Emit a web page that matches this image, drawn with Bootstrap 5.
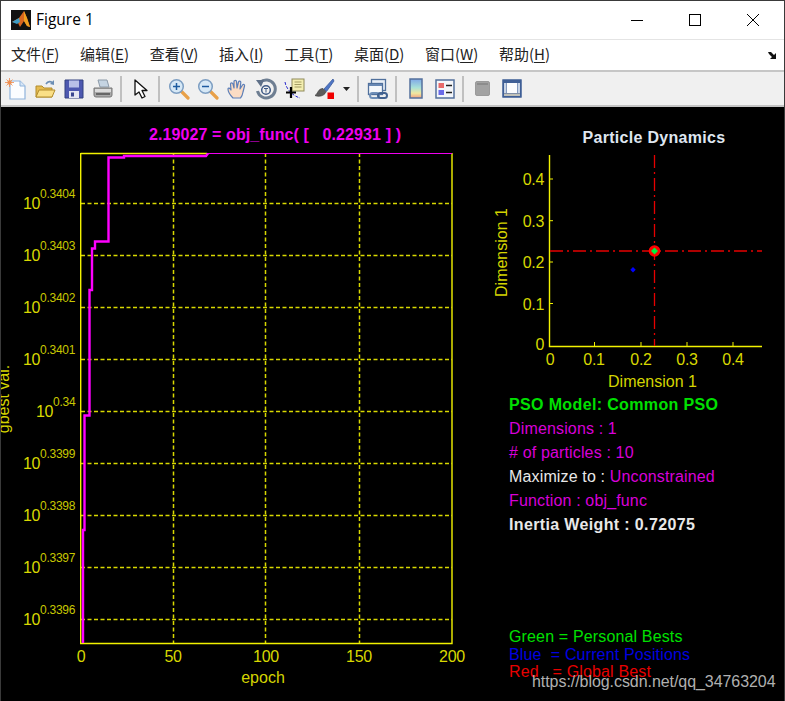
<!DOCTYPE html>
<html lang="zh">
<head>
<meta charset="utf-8">
<title>Figure 1</title>
<link href="https://cdn.jsdelivr.net/npm/bootstrap@5.3.0/dist/css/bootstrap.min.css" rel="stylesheet">
<style>
html,body{margin:0;height:701px;overflow:hidden;background:#000}
.fig-win{height:701px;border:1px solid #3a3a3a;border-bottom:0;background:#000}
.title-bar{height:38px;background:#fff;font:15px/1 "Open Sans","Noto Sans",sans-serif;color:#000;padding-left:10px}
.title-txt{margin-left:5px;font-size:15.5px}
.win-btns{margin-left:auto;padding-right:2px}
.win-btn{width:58px;height:38px}
.menu-bar{height:33px;background:#fff;border-top:1px solid #e4e4e4;border-bottom:2px solid #c6c6c6;padding:0 6px 3px 10px;gap:20.6px;font:15px/1 "Noto Sans CJK SC",sans-serif;color:#222}
.menu-bar u{text-underline-offset:2px}
.menu-end{margin-left:auto;margin-top:3px}
.tool-bar{height:35px;background:#f0f0f0;border-bottom:2px solid #c4c4c4}
.tb-btn{width:29px;height:32px}
.tb-drop{width:16px;height:32px}
.tb-sep{width:2px;height:26px;margin:0 4px 0 3px;background:#c0c0c0}
.plot-svg{display:block;width:783px;height:594px;font-family:"Liberation Sans",sans-serif}
.axis-txt{fill:#d8d800;font-size:16px;letter-spacing:-.3px}
.exp-txt{fill:#c8c800;font-size:12px;letter-spacing:-.25px}
.lab-txt{fill:#d4d400;font-size:16px}
.info{font-size:16px;letter-spacing:.15px}
.info-b{font-size:16px;font-weight:700;letter-spacing:.36px}
.c-mag{fill:#d800d8}
.c-grn{fill:#00e000}
.c-blu{fill:#0000e0}
.c-red{fill:#e80000}
.c-wht{fill:#e8e8e8}
.mark-txt{fill:#b0b0b0;font-size:16px;letter-spacing:-.06px}
.title-mag{fill:#f000f0;font-size:16px;font-weight:700;letter-spacing:.1px}
.title-wht{fill:#dfe6f0;font-size:16px;font-weight:700;letter-spacing:.3px}
</style>
</head>
<body>
<div class="fig-win d-flex flex-column">
  <div class="title-bar d-flex align-items-center">
    <svg width="20" height="20" viewBox="0 0 20 20"><rect width="20" height="20" fill="#111"/><path d="M1 12 8 8l5-7 3 7 3 9-3-1-3-5-4 6-2-4z" fill="#d9661f"/><path d="M13 1l3 7 3 9-3-1-3-5z" fill="#f0a020"/><path d="M1 12l7-4 1 4-3 2z" fill="#3f9cc4"/></svg>
    <span class="title-txt">Figure 1</span>
    <div class="win-btns d-flex">
      <div class="win-btn d-flex align-items-center justify-content-center"><svg width="12" height="12"><path d="M0 6.500h12" stroke="#000"/></svg></div>
      <div class="win-btn d-flex align-items-center justify-content-center"><svg width="12" height="12"><rect x=".5" y=".5" width="11" height="11" fill="none" stroke="#000"/></svg></div>
      <div class="win-btn d-flex align-items-center justify-content-center"><svg width="12" height="12"><path d="M0 0l12 12M12 0 0 12" stroke="#000"/></svg></div>
    </div>
  </div>
  <div class="menu-bar d-flex align-items-center">
    <span>文件(<u>F</u>)</span><span>编辑(<u>E</u>)</span><span>查看(<u>V</u>)</span><span>插入(<u>I</u>)</span><span>工具(<u>T</u>)</span><span>桌面(<u>D</u>)</span><span>窗口(<u>W</u>)</span><span>帮助(<u>H</u>)</span>
    <svg class="menu-end" width="10" height="9" viewBox="0 0 10 9"><path d="M0 1h3l3 3 2-2v6H2l2-2-3-3z" fill="#111"/></svg>
  </div>
  <div class="tool-bar d-flex align-items-center">
    <div class="tb-btn d-flex align-items-center justify-content-center"><svg width="22" height="22" viewBox="0 0 22 22"><path d="M5 3h10l5 5v13H5z" fill="#fbfdff" stroke="#8fb4dc" stroke-width="1.200"/><path d="M15 3v5h5" fill="#d8e6f6" stroke="#8fb4dc"/><circle cx="4.500" cy="4.500" r="2.200" fill="#f3a15a"/><path d="M4.500 0v9M0 4.500h9M1.500 1.500l6 6M7.500 1.500l-6 6" stroke="#ee8a50" stroke-width=".8"/></svg></div>
    <div class="tb-btn d-flex align-items-center justify-content-center"><svg width="22" height="22" viewBox="0 0 22 22"><path d="M12 6c2-3 5-3 7-1" fill="none" stroke="#6a8db5" stroke-width="1.600"/><path d="M20 2l0 5-4-1z" fill="#6a8db5"/><path d="M2 8h6l2 2h8v9H2z" fill="#e5bb50" stroke="#b28c2c"/><path d="M2 19l3-7h16l-3 7z" fill="#fadf86" stroke="#b28c2c"/></svg></div>
    <div class="tb-btn d-flex align-items-center justify-content-center"><svg width="22" height="22" viewBox="0 0 22 22"><path d="M2 2h18v18H2z" fill="#4d58b0" stroke="#33407f"/><rect x="6" y="2.500" width="10" height="7" fill="#b8c0e8"/><rect x="6" y="13" width="10" height="7" fill="#e4e6f2"/><rect x="8" y="14.500" width="3" height="4" fill="#3a4690"/></svg></div>
    <div class="tb-btn d-flex align-items-center justify-content-center"><svg width="22" height="22" viewBox="0 0 22 22"><path d="M6 2h9l2 7H8z" fill="#c5d4e2" stroke="#8c9aa8"/><path d="M2 10h18v7a2 2 0 0 1-2 2H4a2 2 0 0 1-2-2z" fill="#a9a9a9" stroke="#777"/><path d="M3 11h16v3H3z" fill="#dcdcdc"/><rect x="4" y="15" width="14" height="2" fill="#666"/></svg></div>
    <div class="tb-sep"></div>
    <div class="tb-btn d-flex align-items-center justify-content-center"><svg width="16" height="20" viewBox="0 0 16 20"><path d="M2 1v15l4-3 3 6 3-1.500-3-6h5z" fill="#fff" stroke="#111" stroke-width="1.300" stroke-linejoin="round"/></svg></div>
    <div class="tb-sep"></div>
    <div class="tb-btn d-flex align-items-center justify-content-center"><svg width="22" height="22" viewBox="0 0 22 22"><path d="M13 13l7 7" stroke="#e8a048" stroke-width="3.200" stroke-linecap="round"/><circle cx="8.500" cy="8.500" r="6.800" fill="#d6e8f6" stroke="#7d9ec2" stroke-width="1.500"/><path d="M8.500 5v7M5 8.500h7" stroke="#1d5ba0" stroke-width="1.500"/></svg></div>
    <div class="tb-btn d-flex align-items-center justify-content-center"><svg width="22" height="22" viewBox="0 0 22 22"><path d="M13 13l7 7" stroke="#e8a048" stroke-width="3.200" stroke-linecap="round"/><circle cx="8.500" cy="8.500" r="6.800" fill="#d6e8f6" stroke="#7d9ec2" stroke-width="1.500"/><path d="M5 8.500h7" stroke="#1d5ba0" stroke-width="1.500"/></svg></div>
    <div class="tb-btn d-flex align-items-center justify-content-center"><svg width="22" height="22" viewBox="0 0 22 22"><path d="M7 20c-2-2-5-6-5-9 0-1.500 2-1 3 1L4.500 6c0-1.500 2-1.500 2.500 0L8 10 8 3.500c0-1.500 2.500-1.500 2.500 0L11 10l1.500-6c.4-1.500 2.500-1 2.300.5L14 11l2.500-4c1-1.300 2.500-.5 2 1L17 14c-.5 3-1 4.500-2.500 6z" fill="#fbdcc4" stroke="#5c7fb8" stroke-width="1.200" stroke-linejoin="round"/></svg></div>
    <div class="tb-btn d-flex align-items-center justify-content-center"><svg width="22" height="22" viewBox="0 0 22 22"><path d="M5 4.500A9 9 0 1 1 2.500 13" fill="none" stroke="#6e7e92" stroke-width="3"/><path d="M1 2l8 0-3 7z" fill="#5f7088"/><circle cx="11" cy="12" r="4.300" fill="none" stroke="#3f5a86" stroke-width="1.500"/><path d="M9 10.500h4M11 10.500v4" stroke="#3f5a86"/></svg></div>
    <div class="tb-btn d-flex align-items-center justify-content-center"><svg width="22" height="22" viewBox="0 0 22 22"><rect x="8" y="1" width="12" height="12" fill="#f3eeb0" stroke="#8f8a5a"/><path d="M10.500 4h7M10.500 6.500h7M10.500 9h7" stroke="#a39c62"/><path d="M1 4c1 7 8 14 15 16" fill="none" stroke="#2222cc" stroke-dasharray="3 1.500"/><path d="M7 9v11M2 14.500h10" stroke="#000" stroke-width="2.200"/></svg></div>
    <div class="tb-btn d-flex align-items-center justify-content-center"><svg width="22" height="22" viewBox="0 0 22 22"><path d="M20 1l-9 10 2.500 2.500L21 3z" fill="#4f76c6" stroke="#3a5a9c" stroke-width=".8"/><path d="M10 10.500c-5 0-5 5-8 7 3 1.500 9 1 11-3.500z" fill="#5c5c5c" stroke="#333" stroke-width=".6"/><rect x="14.500" y="14.500" width="6.500" height="6.500" fill="#f00000"/></svg></div>
    <div class="tb-drop d-flex align-items-center justify-content-center"><svg width="7" height="4"><path d="M0 0h7L3.500 4z" fill="#222"/></svg></div>
    <div class="tb-sep"></div>
    <div class="tb-btn d-flex align-items-center justify-content-center"><svg width="22" height="22" viewBox="0 0 22 22"><rect x="4.500" y="1.500" width="14" height="11" fill="#e8eef6" stroke="#50709c" stroke-width="1.300"/><rect x="1.500" y="5.500" width="14" height="11" fill="#f6f8fb" stroke="#50709c" stroke-width="1.300"/><path d="M2 6h13v2H2z" fill="#6888b4"/><rect x="3" y="15" width="9" height="5" rx="2.500" fill="none" stroke="#6f8fb8" stroke-width="2"/><rect x="11" y="15" width="9" height="5" rx="2.500" fill="none" stroke="#41618f" stroke-width="2"/></svg></div>
    <div class="tb-sep"></div>
    <div class="tb-btn d-flex align-items-center justify-content-center"><svg width="14" height="21" viewBox="0 0 14 21"><defs><linearGradient id="cbar" x1="0" y1="0" x2="0" y2="1"><stop offset="0" stop-color="#7fa8e8"/><stop offset=".45" stop-color="#a8e0d8"/><stop offset=".75" stop-color="#f0e8a0"/><stop offset="1" stop-color="#f0a080"/></linearGradient></defs><rect x="1" y="1" width="12" height="19" fill="url(#cbar)" stroke="#54709c" stroke-width="1.500"/></svg></div>
    <div class="tb-btn d-flex align-items-center justify-content-center"><svg width="20" height="20" viewBox="0 0 20 20"><rect x="1" y="1" width="18" height="18" fill="#f4f6fa" stroke="#54709c" stroke-width="1.500"/><rect x="3.500" y="4" width="5.500" height="5" fill="#e86a6a"/><rect x="3.500" y="11" width="5.500" height="5" fill="#6a6ae8"/><path d="M11 6.500h6M11 13.500h6" stroke="#222" stroke-width="1.300"/></svg></div>
    <div class="tb-sep"></div>
    <div class="tb-btn d-flex align-items-center justify-content-center"><svg width="15" height="15" viewBox="0 0 15 15"><rect x=".5" y=".5" width="14" height="14" rx="1.500" fill="#a2a2a2" stroke="#9a9a9a"/><path d="M2 2h11v2H2z" fill="#8c8c8c"/></svg></div>
    <div class="tb-btn d-flex align-items-center justify-content-center"><svg width="20" height="19" viewBox="0 0 20 19"><rect x=".8" y=".8" width="18.400" height="17.400" fill="#3f5f96" stroke="#3f5f96"/><rect x="5" y="4" width="10" height="10" fill="#fbfcfe"/><rect x="2" y="4" width="2.500" height="10" fill="#c8d4e6"/><rect x="15.500" y="4" width="2.500" height="10" fill="#c8d4e6"/><rect x="2" y="14.500" width="16" height="2.500" fill="#c0c0b8"/></svg></div>
  </div>
  <svg class="plot-svg" viewBox="1 107 783 594" xmlns="http://www.w3.org/2000/svg">
    <g stroke="#d8d800" stroke-width="1.500" stroke-dasharray="4 2.500" fill="none">
      <path d="M81 203.500H452M81 255.500H452M81 307.500H452M81 359.500H452M81 411.500H452M81 463.500H452M81 515.500H452M81 567.500H452M81 619.500H452"/>
      <path d="M173.500 153V643M265.500 153V643M359.500 153V643"/>
    </g>
    <path d="M80.700 153.500H207M80.700 153V643.500H452V153" fill="none" stroke="#f2f200" stroke-width="1.400"/>
    <path d="M207 153.500H452" fill="none" stroke="#f000f0" stroke-width="1.200"/>
    <path d="M83 643V530H84.500V415.500H89.500V290H92V248.500H95V241.500H108.500V157.500H124V156H206L208 153.500" fill="none" stroke="#ff00ff" stroke-width="2.400"/>

    <text class="title-mag" x="149" y="140" xml:space="preserve">2.19027 = obj_func( [   0.22931 ] )</text>

    <text class="axis-txt" x="23" y="209">10</text><text class="exp-txt" x="40" y="198">0.3404</text>
    <text class="axis-txt" x="23" y="261">10</text><text class="exp-txt" x="40" y="250">0.3403</text>
    <text class="axis-txt" x="23" y="313">10</text><text class="exp-txt" x="40" y="302">0.3402</text>
    <text class="axis-txt" x="23" y="365">10</text><text class="exp-txt" x="40" y="354">0.3401</text>
    <text class="axis-txt" x="36" y="417">10</text><text class="exp-txt" x="53" y="406">0.34</text>
    <text class="axis-txt" x="23" y="469">10</text><text class="exp-txt" x="40" y="458">0.3399</text>
    <text class="axis-txt" x="23" y="521">10</text><text class="exp-txt" x="40" y="510">0.3398</text>
    <text class="axis-txt" x="23" y="573">10</text><text class="exp-txt" x="40" y="562">0.3397</text>
    <text class="axis-txt" x="23" y="625">10</text><text class="exp-txt" x="40" y="614">0.3396</text>

    <g class="axis-txt" text-anchor="middle">
      <text x="81" y="662">0</text><text x="173" y="662">50</text><text x="266" y="662">100</text><text x="359" y="662">150</text><text x="452" y="662">200</text>
    </g>
    <text class="lab-txt" x="263" y="683" text-anchor="middle">epoch</text>
    <text class="lab-txt" transform="translate(9 399) rotate(-90)" text-anchor="middle">gbest val.</text>

    <text class="title-wht" x="654" y="143" text-anchor="middle">Particle Dynamics</text>
    <path d="M549.500 155V346.500H762" fill="none" stroke="#f2f200" stroke-width="1.400"/>
    <path d="M549 179h4M549 220.700h4M549 262h4M549 303.500h4M594.500 346v-4M641 346v-4M687 346v-4M733 346v-4" stroke="#f2f200"/>
    <g class="axis-txt" text-anchor="end">
      <text x="544" y="185">0.4</text><text x="544" y="227">0.3</text><text x="544" y="268">0.2</text><text x="544" y="309.500">0.1</text><text x="544" y="350">0</text>
    </g>
    <g class="axis-txt" text-anchor="middle">
      <text x="550" y="365">0</text><text x="594" y="365">0.1</text><text x="641" y="365">0.2</text><text x="687" y="365">0.3</text><text x="733" y="365">0.4</text>
    </g>
    <text class="lab-txt" x="652.500" y="387" text-anchor="middle">Dimension 1</text>
    <text class="lab-txt" transform="translate(507 252.500) rotate(-90)" text-anchor="middle">Dimension 1</text>
    <path d="M550 251H762M654.500 155V346" fill="none" stroke="#e60000" stroke-width="1.300" stroke-dasharray="13 4 2 4"/>
    <circle cx="654.500" cy="251" r="5.800" fill="#ff0000"/>
    <path d="M654.500 247.500l3.500 3.500-3.500 3.500-3.500-3.500z" fill="#00f040"/>
    <path d="M633 267l2.700 2.700-2.700 2.700-2.700-2.700z" fill="#0000ff"/>

    <text class="info-b c-grn" x="509" y="410">PSO Model: Common PSO</text>
    <text class="info c-mag" x="509" y="434">Dimensions : 1</text>
    <text class="info c-mag" x="509" y="458"># of particles : 10</text>
    <text class="info" x="509" y="482"><tspan class="c-wht">Maximize to : </tspan><tspan class="c-mag">Unconstrained</tspan></text>
    <text class="info c-mag" x="509" y="505.500">Function : obj_func</text>
    <text class="info-b c-wht" x="509" y="529.500">Inertia Weight : 0.72075</text>

    <text class="info c-grn" x="509" y="642">Green = Personal Bests</text>
    <text class="info c-blu" x="509" y="659.500" xml:space="preserve">Blue  = Current Positions</text>
    <text class="info c-red" x="509" y="677" xml:space="preserve">Red   = Global Best</text>
    <text class="mark-txt" x="532" y="687">https://blog.csdn.net/qq_34763204</text>
  </svg>
</div>
<script src="https://cdn.jsdelivr.net/npm/bootstrap@5.3.0/dist/js/bootstrap.bundle.min.js"></script>
</body>
</html>
